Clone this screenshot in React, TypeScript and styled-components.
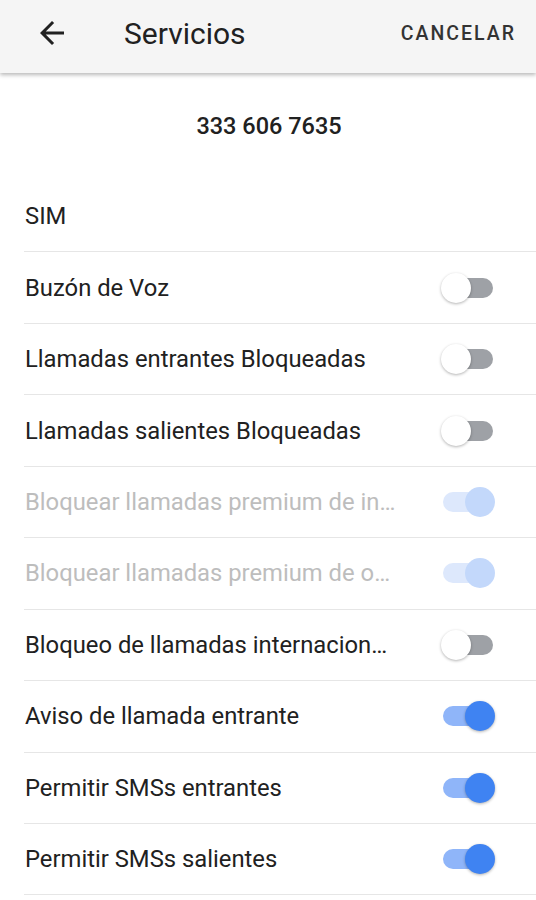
import React from "react";
import styled, { createGlobalStyle, css } from "styled-components";

const GlobalStyle = createGlobalStyle`
  html, body {
    margin: 0;
    padding: 0;
    background: #ffffff;
    font-family: Roboto, "Noto Sans", sans-serif;
  }
`;

const Page = styled.div`
  width: 536px;
  min-height: 900px;
  background: #fff;
  overflow: hidden;
`;

const Toolbar = styled.header`
  height: 73px;
  background: #f5f5f5;
  display: flex;
  align-items: center;
  box-shadow: 0 2px 4px rgba(0, 0, 0, 0.28);
  position: relative;
  z-index: 1;
  padding-bottom: 7px;
  box-sizing: border-box;
`;

const BackButton = styled.button`
  border: 0;
  background: none;
  padding: 0;
  margin-left: 34px;
  width: 36px;
  height: 36px;
  display: flex;
  color: #212121;
  cursor: pointer;
`;

const Title = styled.h1`
  margin: 0 0 0 54px;
  font-size: 30px;
  font-weight: 400;
  color: #212121;
  flex: 1;
`;

const Cancel = styled.button`
  border: 0;
  background: none;
  padding: 0;
  margin-right: 20px;
  font-family: Roboto, sans-serif;
  font-size: 19.5px;
  font-weight: 500;
  letter-spacing: 2px;
  color: #333;
`;

const Number = styled.div`
  height: 108px;
  display: flex;
  align-items: center;
  justify-content: center;
  font-size: 23.5px;
  font-weight: 500;
  color: #212121;
  padding-bottom: 2px;
  padding-left: 2px;
  box-sizing: border-box;
`;

const List = styled.div`
  display: flex;
  flex-direction: column;
`;

const Row = styled.div`
  height: 71.45px;
  box-sizing: border-box;
  margin-left: 24px;
  padding-right: 41px;
  border-bottom: 1.5px solid #e6e6e6;
  display: flex;
  align-items: center;
  justify-content: space-between;
`;

const Label = styled.span<{ $disabled?: boolean }>`
  font-size: 23.8px;
  color: ${(p) => (p.$disabled ? "#bdbdbd" : "#212121")};
  max-width: 372px;
  white-space: nowrap;
  overflow: hidden;
  text-overflow: ellipsis;
  padding-left: 1px;
`;

const Switch = styled.div`
  position: relative;
  width: 54px;
  height: 30px;
  flex: none;
`;

const Track = styled.div<{ $on: boolean; $disabled?: boolean }>`
  position: absolute;
  left: 2px;
  right: 2px;
  top: 5px;
  height: 20px;
  border-radius: 10px;
  background: ${(p) =>
    p.$disabled ? "#dde8fc" : p.$on ? "#8fb5f9" : "#9ea1a6"};
`;

const Thumb = styled.div<{ $on: boolean; $disabled?: boolean }>`
  position: absolute;
  top: 0;
  width: 30px;
  height: 30px;
  border-radius: 50%;
  ${(p) => (p.$on ? css`right: 0;` : css`left: 0;`)}
  background: ${(p) =>
    p.$disabled ? "#c3d8fb" : p.$on ? "#3f83f2" : "#ffffff"};
  box-shadow: ${(p) => (p.$disabled ? "none" : "0 1px 3px rgba(0, 0, 0, 0.3)")};
`;

type Item = { label: string; on?: boolean; disabled?: boolean; toggle?: boolean };

const items: Item[] = [
  { label: "SIM", toggle: false },
  { label: "Buzón de Voz", on: false },
  { label: "Llamadas entrantes Bloqueadas", on: false },
  { label: "Llamadas salientes Bloqueadas", on: false },
  { label: "Bloquear llamadas premium de internacionales", on: true, disabled: true },
  { label: "Bloquear llamadas premium de otros operadores", on: true, disabled: true },
  { label: "Bloqueo de llamadas internacionales", on: false },
  { label: "Aviso de llamada entrante", on: true },
  { label: "Permitir SMSs entrantes", on: true },
  { label: "Permitir SMSs salientes", on: true },
];

const Toggle = ({ on, disabled }: { on: boolean; disabled?: boolean }) => (
  <Switch>
    <Track $on={on} $disabled={disabled} />
    <Thumb $on={on} $disabled={disabled} />
  </Switch>
);

export default function App() {
  return (
    <Page>
      <GlobalStyle />
      <Toolbar>
        <BackButton aria-label="Atrás">
          <svg width="36" height="36" viewBox="0 0 24 24" fill="currentColor">
            <path d="M20 11H7.83l5.59-5.59L12 4l-8 8 8 8 1.41-1.41L7.83 13H20v-2z" />
          </svg>
        </BackButton>
        <Title>Servicios</Title>
        <Cancel>CANCELAR</Cancel>
      </Toolbar>
      <Number>333 606 7635</Number>
      <List>
        {items.map((it) => (
          <Row key={it.label}>
            <Label $disabled={it.disabled}>{it.label}</Label>
            {it.toggle !== false && <Toggle on={!!it.on} disabled={it.disabled} />}
          </Row>
        ))}
      </List>
    </Page>
  );
}
